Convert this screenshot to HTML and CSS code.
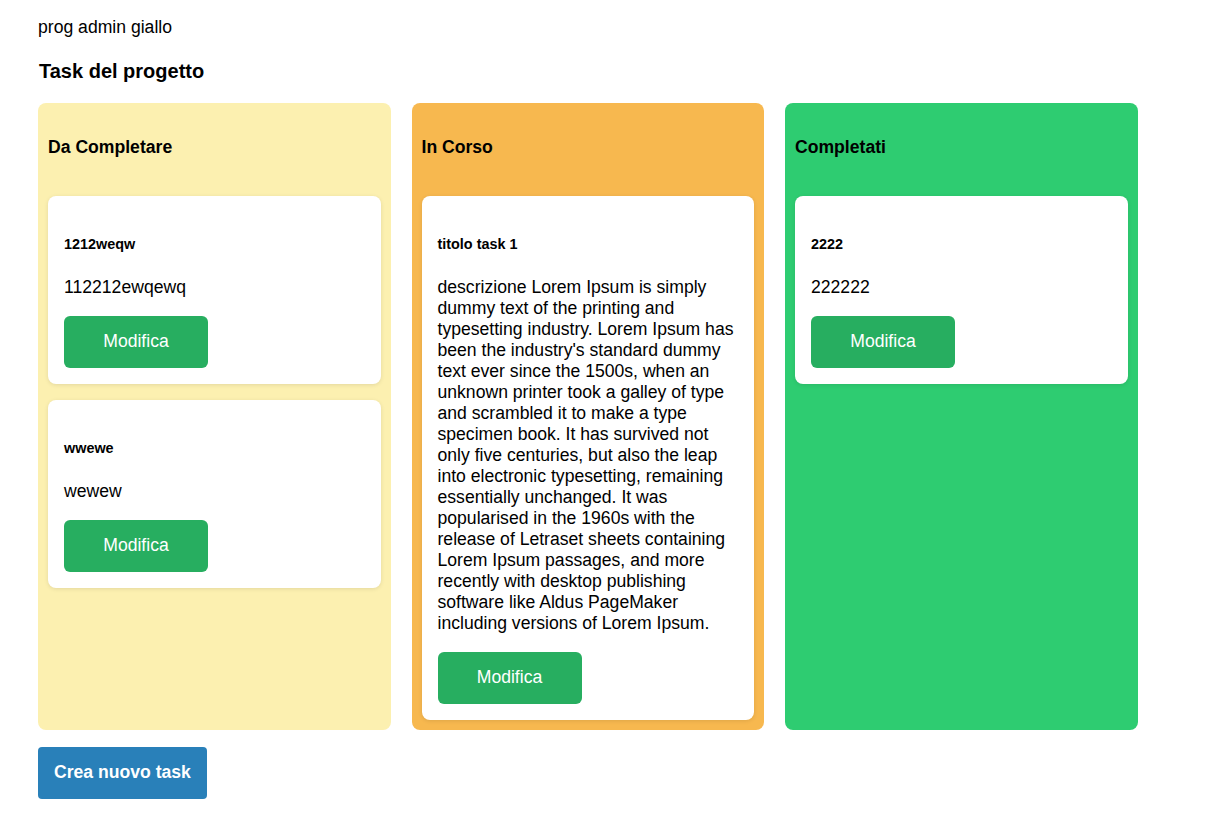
FILE: index.html
```html
<!DOCTYPE html>
<html lang="it">
<head>
<meta charset="utf-8">
<title>Task del progetto</title>
<link rel="stylesheet" href="styles.css">
</head>
<body>
  <div class="project-name">prog admin giallo</div>
  <h3 class="page-title">Task del progetto</h3>
  <div class="board">
    <section class="column column-todo">
      <h4 class="column-title">Da Completare</h4>
      <div class="card">
        <h5 class="card-title">1212weqw</h5>
        <p class="card-desc">112212ewqewq</p>
        <button class="btn-edit">Modifica</button>
      </div>
      <div class="card">
        <h5 class="card-title">wwewe</h5>
        <p class="card-desc">wewew</p>
        <button class="btn-edit">Modifica</button>
      </div>
    </section>
    <section class="column column-progress">
      <h4 class="column-title">In Corso</h4>
      <div class="card">
        <h5 class="card-title">titolo task 1</h5>
        <p class="card-desc">descrizione Lorem Ipsum is simply dummy text of the printing and typesetting industry. Lorem Ipsum has been the industry's standard dummy text ever since the 1500s, when an unknown printer took a galley of type and scrambled it to make a type specimen book. It has survived not only five centuries, but also the leap into electronic typesetting, remaining essentially unchanged. It was popularised in the 1960s with the release of Letraset sheets containing Lorem Ipsum passages, and more recently with desktop publishing software like Aldus PageMaker including versions of Lorem Ipsum.</p>
        <button class="btn-edit">Modifica</button>
      </div>
    </section>
    <section class="column column-done">
      <h4 class="column-title">Completati</h4>
      <div class="card">
        <h5 class="card-title">2222</h5>
        <p class="card-desc">222222</p>
        <button class="btn-edit">Modifica</button>
      </div>
    </section>
  </div>
  <button class="btn-create">Crea nuovo task</button>
</body>
</html>
```
FILE: styles.css
```css
html, body {
  margin: 0;
  padding: 0;
  background: #ffffff;
}

body {
  font-family: "Liberation Sans", Arial, sans-serif;
  font-size: 17.6px;
  color: #000;
  padding: 17px 38px 20px 38px;
}

.project-name {
  line-height: 21px;
}

.page-title {
  margin: 20.5px 0 20px 1px;
  font-size: 20px;
  line-height: 24px;
  font-weight: bold;
}

.board {
  display: flex;
  align-items: stretch;
  gap: 21px;
}

.column {
  width: 352.5px;
  box-sizing: border-box;
  padding: 10px;
  border-radius: 8px;
  display: flex;
  flex-direction: column;
  gap: 16px;
}

.column-todo { background: #fcf0b0; }
.column-progress { background: #f7b84f; }
.column-done { background: #2ecc71; }

.column-title {
  margin: 24.5px 0 21.5px 0;
  font-size: 17.6px;
  line-height: 21px;
  font-weight: bold;
}

.card {
  background: #ffffff;
  border-radius: 8px;
  padding: 16px;
  box-shadow: 0 1px 4px rgba(0, 0, 0, 0.1);
}

.card-title {
  margin: 24.5px 0 24px 0;
  font-size: 14.4px;
  line-height: 17px;
  font-weight: bold;
}

.card-desc {
  margin: 0 0 17.5px 0;
  font-size: 17.6px;
  line-height: 21px;
}

.btn-edit {
  display: block;
  width: 144px;
  height: 52px;
  border: none;
  border-radius: 6px;
  background: #27ae60;
  color: #ffffff;
  font-family: "Liberation Sans", Arial, sans-serif;
  font-size: 17.6px;
  padding: 0;
}

.btn-create {
  display: block;
  margin-top: 17px;
  height: 52px;
  padding: 0 16px;
  border: none;
  border-radius: 4px;
  background: #2980b9;
  color: #ffffff;
  font-family: "Liberation Sans", Arial, sans-serif;
  font-size: 17.6px;
  font-weight: bold;
}
```
